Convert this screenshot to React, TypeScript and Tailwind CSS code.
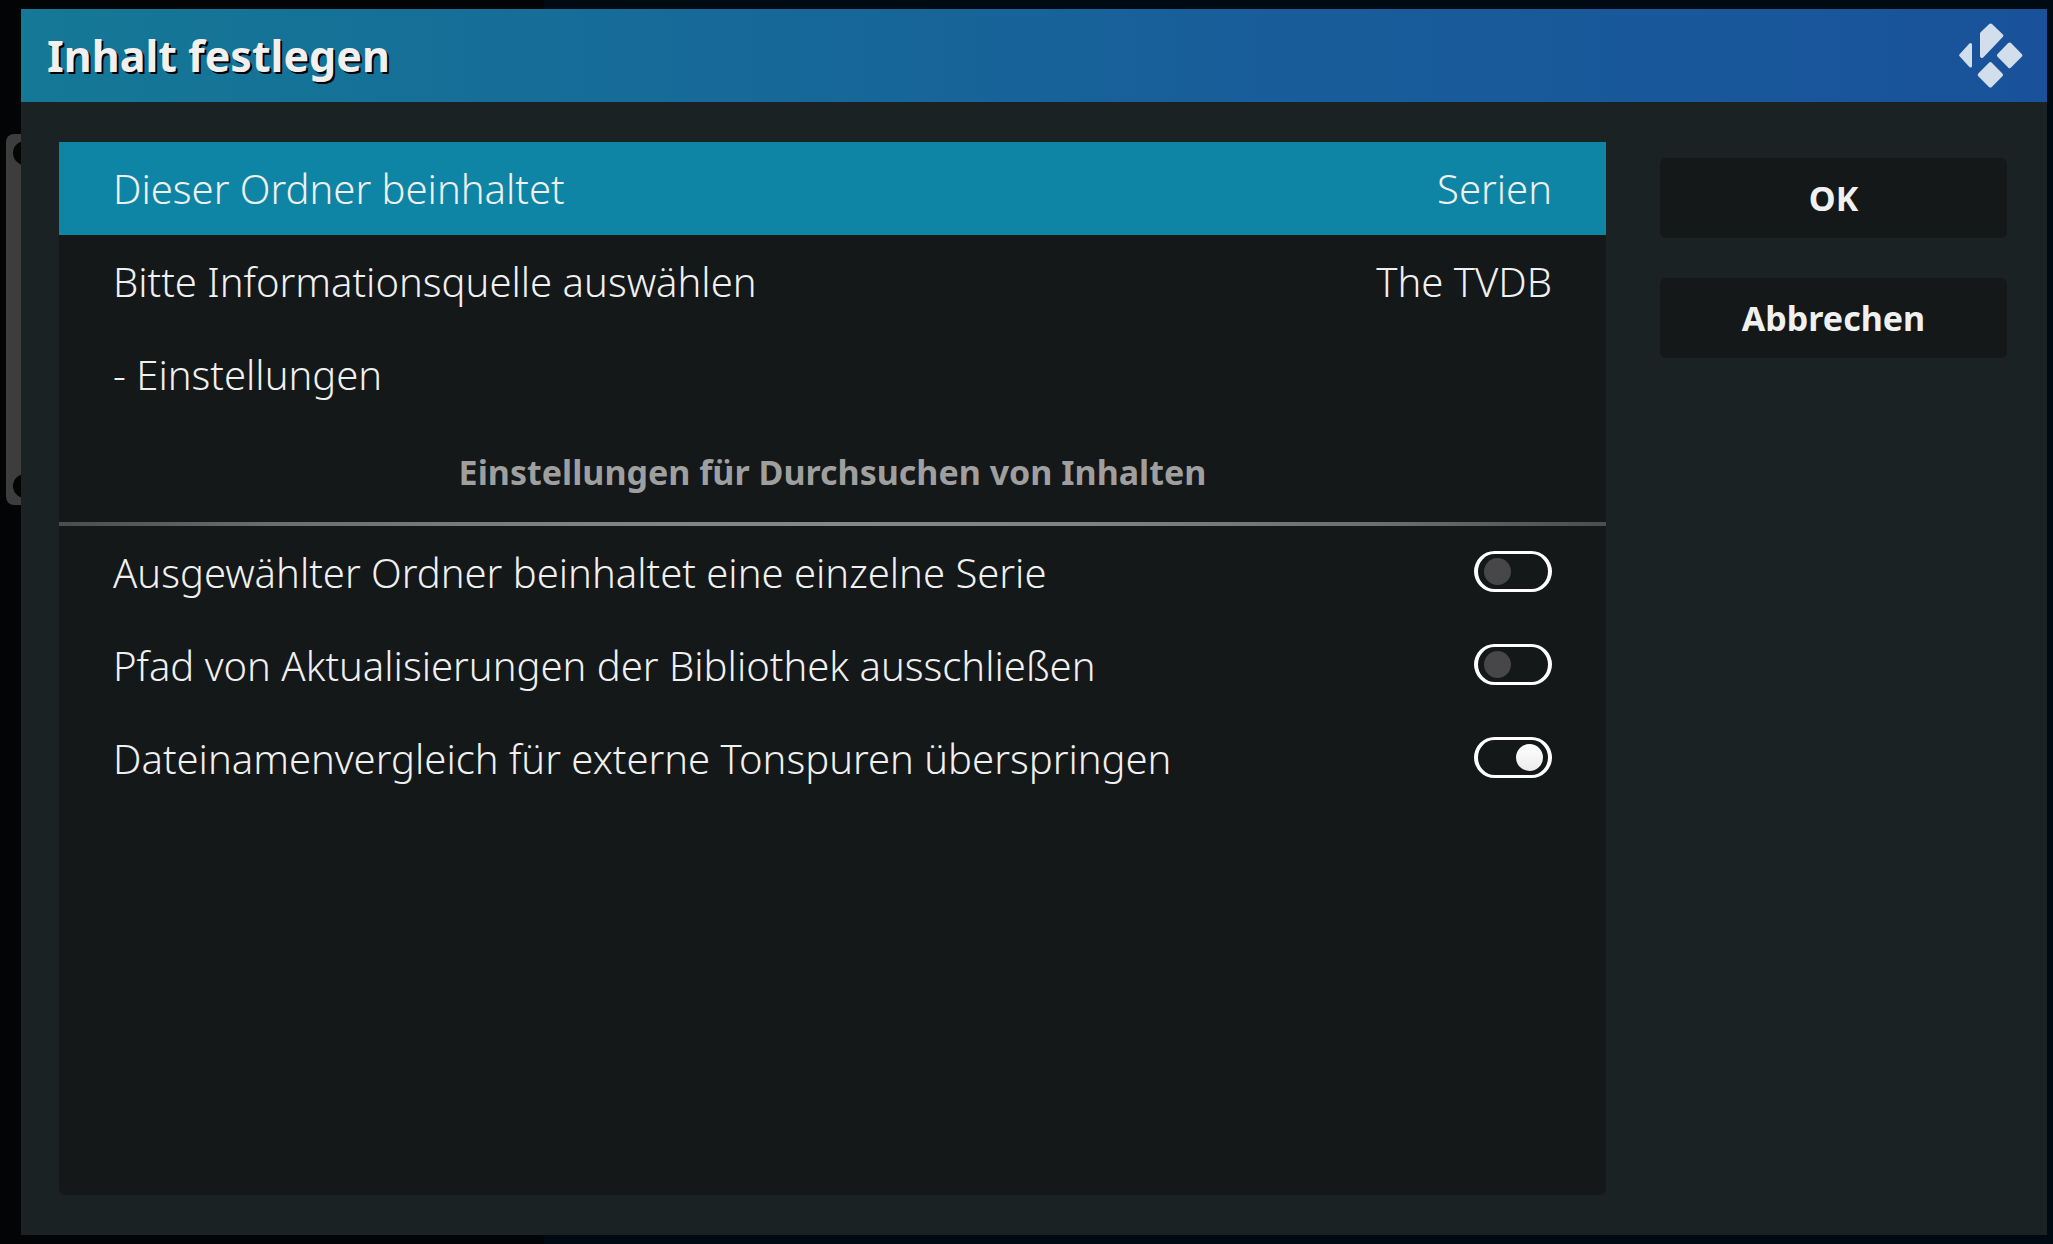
import { useState } from "react";

interface ValueRowProps {
  label: string;
  value?: string;
  active?: boolean;
}

interface ToggleRowProps {
  id: string;
  label: string;
  defaultChecked?: boolean;
}

const valueRows: ValueRowProps[] = [
  { label: "Dieser Ordner beinhaltet", value: "Serien", active: true },
  { label: "Bitte Informationsquelle auswählen", value: "The TVDB" },
  { label: "- Einstellungen" },
];

const toggleRows: ToggleRowProps[] = [
  { id: "single-show", label: "Ausgewählter Ordner beinhaltet eine einzelne Serie" },
  { id: "exclude-path", label: "Pfad von Aktualisierungen der Bibliothek ausschließen" },
  { id: "skip-audio", label: "Dateinamenvergleich für externe Tonspuren überspringen", defaultChecked: true },
];

function KodiLogo() {
  return (
    <svg viewBox="0 0 64 66" className="w-16 h-[66px] shrink-0" fill="#d2deeb" stroke="#d2deeb" strokeWidth="4" strokeLinejoin="round" aria-hidden="true">
      <path d="M11.5 21.5V43L1.7 32.3Z" strokeWidth="3" />
      <path d="M23 10.8L31.6 2.5L42.3 12.6L23 33Z" />
      <path d="M50.6 21.5L61.3 32.3L50.6 43.2L40 32.3Z" />
      <path d="M31.4 41.2L42 51.8L31.4 62.5L20.7 51.8Z" />
    </svg>
  );
}

function ValueRow({ label, value, active = false }: ValueRowProps) {
  return (
    <button
      type="button"
      className={`
        w-full h-[93px] px-[54px] flex items-center justify-between
        text-left text-[40px] leading-[48px] font-light cursor-pointer
        ${active ? 'bg-[#0f85a5]' : ''}
      `}
    >
      <span>{label}</span>
      {value && <span>{value}</span>}
    </button>
  );
}

function ToggleRow({ id, label, defaultChecked = false }: ToggleRowProps) {
  const [checked, setChecked] = useState(defaultChecked);

  return (
    <div className="h-[93px] px-[54px] flex items-center justify-between">
      <label htmlFor={id} className="text-[40px] leading-[48px] font-light">
        {label}
      </label>
      <input
        id={id}
        type="checkbox"
        role="switch"
        checked={checked}
        onChange={(e) => setChecked(e.target.checked)}
        className="
          appearance-none shrink-0 w-[78px] h-[41px] mb-[3px] pl-[6px] pr-[5px] rounded-full cursor-pointer
          border-x-4 border-y-3 border-white flex items-center
          before:block before:w-[27px] before:h-[27px] before:rounded-full before:bg-[#474749]
          checked:justify-end checked:before:bg-linear-to-b checked:before:from-white checked:before:to-[#ebebeb]
        "
      />
    </div>
  );
}

function DialogButton({ label }: { label: string }) {
  return (
    <button
      type="button"
      className="w-full h-20 rounded-md bg-[#141819] text-[34px] leading-[48px] font-bold cursor-pointer"
    >
      {label}
    </button>
  );
}

export default function App() {
  return (
    <div className="relative min-h-screen pt-[9px] pr-[6px] pb-[9px] pl-[21px] flex bg-linear-to-r from-[#030406] from-[26.5%] to-[#000a12] to-[26.5%] font-['Noto_Sans',sans-serif] text-[#f0f0f0]">
      {/* Edge of the window behind the dialog */}
      <div className="absolute left-[6px] top-[134px] w-10 h-[371px] rounded-lg bg-[#3d3d3d] overflow-hidden">
        <div className="absolute left-[7px] top-[7px] w-6 h-6 rounded-full bg-[#040606]" />
        <div className="absolute left-[7px] bottom-[7px] w-6 h-6 rounded-full bg-[#040606]" />
      </div>

      <div role="dialog" aria-labelledby="dialog-title" className="relative flex-1 flex flex-col bg-[#1b2224]">
        <header className="h-[93px] pl-[26px] pr-6 flex items-center justify-between bg-linear-to-r from-[#157896] via-[#185e9a] via-60% to-[#19529a]">
          <h1 id="dialog-title" className="text-[43px] leading-[60px] font-bold [text-shadow:2px_2px_0_#000]">
            Inhalt festlegen
          </h1>
          <KodiLogo />
        </header>

        <div className="flex-1 flex pt-10 pb-10 pl-[38px] pr-10">
          <main className="flex-1 mr-[54px] rounded-b-md bg-[#141819]">
            {valueRows.map((row) => (
              <ValueRow key={row.label} {...row} />
            ))}

            <h2 className="h-[101px] flex items-center justify-center text-[34px] leading-[48px] font-bold text-[#9f9f9f]">
              Einstellungen für Durchsuchen von Inhalten
            </h2>
            <div className="h-1 bg-[linear-gradient(to_right,#4b4d4d,#6c6e6e_14%,#808181_33%,#868787_50%,#808181_67%,#6c6e6e_86%,#4b4d4d)]" />

            {toggleRows.map((row) => (
              <ToggleRow key={row.id} {...row} />
            ))}
          </main>

          <aside className="w-[347px] pt-4 flex flex-col gap-10">
            <DialogButton label="OK" />
            <DialogButton label="Abbrechen" />
          </aside>
        </div>
      </div>
    </div>
  );
}
